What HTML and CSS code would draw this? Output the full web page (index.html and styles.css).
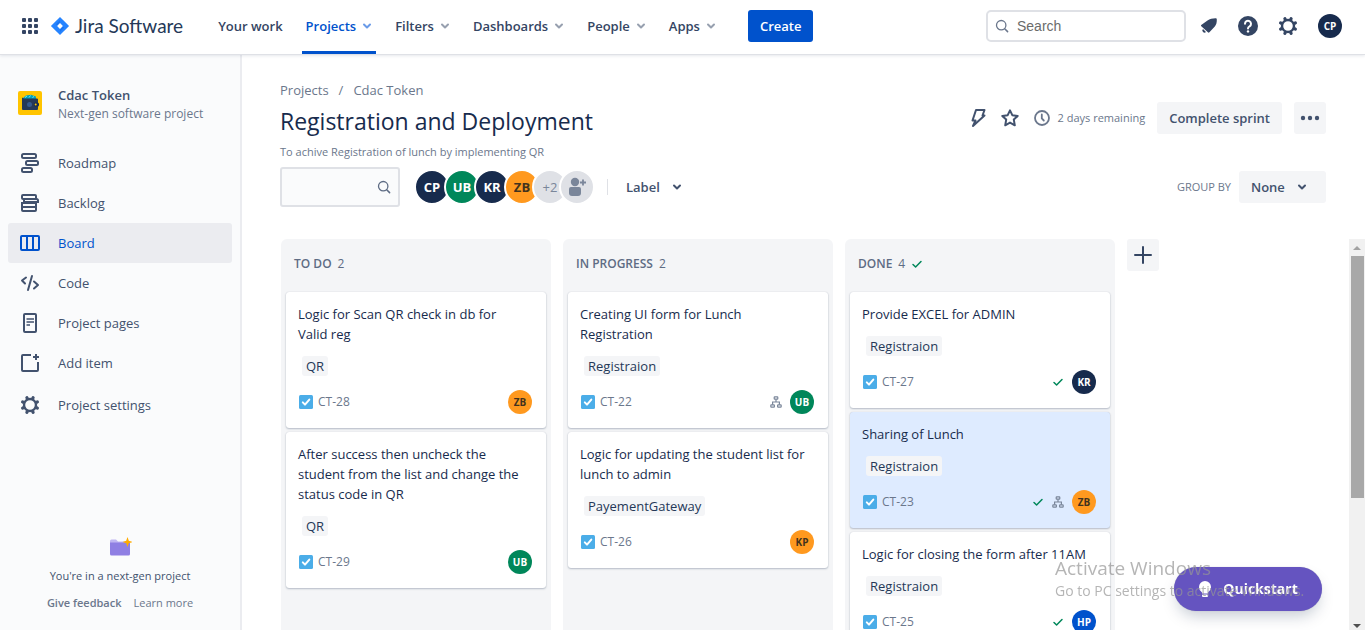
FILE: index.html
```html
<!DOCTYPE html>
<html lang="en">
<head>
<meta charset="utf-8">
<meta name="viewport" content="width=device-width, initial-scale=1">
<title>Registration and Deployment - Jira Software</title>
<link rel="stylesheet" href="styles.css">
</head>
<body>
<svg class="sprite" aria-hidden="true">
  <symbol id="i-chevron" viewBox="0 0 10 10"><path d="M2 3.5 5 6.5 8 3.5" fill="none" stroke="currentColor" stroke-width="2" stroke-linecap="round" stroke-linejoin="round"/></symbol>
  <symbol id="i-search" viewBox="0 0 14 14"><circle cx="6.2" cy="6.2" r="4.700" fill="none" stroke="currentColor" stroke-width="1.3"/><path d="M9.700 9.700 12.600 12.600" stroke="currentColor" stroke-width="1.5" stroke-linecap="round"/></symbol>
  <symbol id="i-gear" viewBox="0 0 20 20"><circle cx="10" cy="10" r="6" fill="none" stroke="currentColor" stroke-width="2.4"/><path d="M7.2 3.2 6.9 2.6M12.8 3.2 13.1 2.6M16.8 7.2 17.4 6.9M16.8 12.8 17.4 13.1M12.8 16.8 13.1 17.4M7.2 16.8 6.9 17.4M3.2 12.8 2.6 13.1M3.2 7.2 2.6 6.9" fill="none" stroke="currentColor" stroke-width="3.2" stroke-linecap="round"/></symbol>
  <symbol id="i-task" viewBox="0 0 14 14"><rect width="14" height="14" rx="1.5" fill="#4bade8"/><path d="M3.8 7.4 6 9.6 10.3 4.6" fill="none" stroke="#fff" stroke-width="2" stroke-linecap="round" stroke-linejoin="round"/></symbol>
  <symbol id="i-check" viewBox="0 0 12 12"><path d="M2 6.5 4.6 9 10 3.5" fill="none" stroke="#00875a" stroke-width="1.5" stroke-linecap="round" stroke-linejoin="round"/></symbol>
  <symbol id="i-tree" viewBox="0 0 12 12"><g fill="none" stroke="#7a869a" stroke-width="1.2"><rect x="4.2" y=".8" width="3.6" height="2.4" rx=".6"/><rect x=".8" y="8.8" width="3.6" height="2.4" rx=".6"/><rect x="7.6" y="8.8" width="3.6" height="2.4" rx=".6"/><path d="M6 3.2V6M2.6 8.8V6H9.4V8.8"/></g></symbol>
</svg>

<header class="topbar">
  <button class="icon-btn switcher" aria-label="Switch to">
    <svg width="16" height="16" viewBox="0 0 16 16" fill="currentColor"><rect width="4" height="4" rx="1"/><rect x="6" width="4" height="4" rx="1"/><rect x="12" width="4" height="4" rx="1"/><rect y="6" width="4" height="4" rx="1"/><rect x="6" y="6" width="4" height="4" rx="1"/><rect x="12" y="6" width="4" height="4" rx="1"/><rect y="12" width="4" height="4" rx="1"/><rect x="6" y="12" width="4" height="4" rx="1"/><rect x="12" y="12" width="4" height="4" rx="1"/></svg>
  </button>
  <a class="logo" href="#">
    <svg width="18" height="18" viewBox="0 0 18 18"><path d="M9 0 17.6 8.4a.9.9 0 0 1 0 1.200L9 18 .4 9.600a.9.9 0 0 1 0-1.200Z" fill="#2684ff"/><path d="M9 3v3L6.200 8.600 4.800 7.200ZM9 15v-3l2.800-2.600 1.400 1.400Z" fill="#0052cc" opacity=".3"/><path d="M9 6.100 11.900 9 9 11.900 6.100 9Z" fill="#fff"/></svg>
    <span>Jira Software</span>
  </a>
  <nav class="mainnav">
    <a href="#">Your work</a>
    <a class="active" href="#">Projects <svg class="chev"><use href="#i-chevron"/></svg></a>
    <a href="#">Filters <svg class="chev"><use href="#i-chevron"/></svg></a>
    <a href="#">Dashboards <svg class="chev"><use href="#i-chevron"/></svg></a>
    <a href="#">People <svg class="chev"><use href="#i-chevron"/></svg></a>
    <a href="#">Apps <svg class="chev"><use href="#i-chevron"/></svg></a>
  </nav>
  <button class="create">Create</button>
  <div class="top-right">
    <label class="search"><svg width="14" height="14"><use href="#i-search"/></svg><input type="text" placeholder="Search" aria-label="Search"></label>
    <button class="icon-btn" aria-label="Notifications"><svg width="18" height="18" viewBox="0 0 18 18" fill="currentColor"><path d="M15.500 1.200c.9 0 1.300.4 1.300 1.200.1 2.800-.5 5.400-2 7L9.400 15.300a1 1 0 0 1-1.500 0L1.300 9.200c-.5-.5-.4-1.200.3-1.500L7.500 3.500c2.200-1.500 5-2.300 8-2.300Z"/><path d="M3 12 6 15a2.100 2.100 0 0 1-3-3Z"/></svg></button>
    <button class="icon-btn" aria-label="Help"><svg width="20" height="20" viewBox="0 0 20 20"><circle cx="10" cy="10" r="10" fill="currentColor"/><path d="M7 7.800a3 3 0 1 1 4.600 2.500c-1 .7-1.600 1-1.600 2.200" fill="none" stroke="#fff" stroke-width="2" stroke-linecap="round"/><circle cx="10" cy="15.400" r="1.200" fill="#fff"/></svg></button>
    <button class="icon-btn" aria-label="Settings"><svg width="20" height="20"><use href="#i-gear"/></svg></button>
    <button class="avatar small navy" aria-label="Your profile">CP</button>
  </div>
</header>

<div class="shell">
  <aside class="sidebar">
    <div class="project">
      <svg width="24" height="24" viewBox="0 0 24 24"><rect width="24" height="24" rx="2" fill="#ffc400"/><path d="M5 7 8 4.500 13 3.800 18 5.500V8H5Z" fill="#00a3bf"/><path d="M7 6.500 9 5M11 6.500l1.500-2M14.500 6.500l1.500-1" stroke="#79e2f2" stroke-width="1"/><path d="M4 6.500 6 7.500H19a1 1 0 0 1 1 1V18a1 1 0 0 1-1 1H5a1 1 0 0 1-1-1Z" fill="#253858"/><circle cx="11.500" cy="13.500" r="2.500" fill="#35598f"/><rect x="16" y="11.500" width="5" height="4" rx="1.500" fill="#172b4d"/><circle cx="17.700" cy="13.500" r="1" fill="#ffc400"/></svg>
      <div><div class="project-name">Cdac Token</div><div class="project-type">Next-gen software project</div></div>
    </div>
    <nav class="sidenav">
      <a href="#"><svg width="20" height="20" viewBox="0 0 20 20" fill="none" stroke="currentColor" stroke-width="2"><rect x="2" y="1" width="14" height="4" rx="1.500"/><rect x="6" y="8" width="12" height="4" rx="1.500"/><rect x="2" y="15" width="10" height="4" rx="1.500"/></svg>Roadmap</a>
      <a href="#"><svg width="20" height="20" viewBox="0 0 20 20" fill="none" stroke="currentColor" stroke-width="2"><rect x="2" y="2" width="14" height="4" rx="1"/><path d="M4 6H16.500a1.500 1.500 0 0 1 1.500 1.500V9H4ZM2 9V17a1 1 0 0 0 1 1H15a1 1 0 0 0 1-1V10M3 14H16M3 10H16"/></svg>Backlog</a>
      <a class="active" href="#"><svg width="20" height="20" viewBox="0 0 20 20" fill="none" stroke="currentColor" stroke-width="2"><rect x="1" y="3" width="18" height="14" rx="1"/><path d="M7 3V17M13 3V17"/></svg>Board</a>
      <a href="#"><svg width="20" height="20" viewBox="0 0 20 20" fill="none" stroke="currentColor" stroke-width="2" stroke-linecap="round" stroke-linejoin="round"><path d="M6 4.500 2 7.500 5 10.500M14 8.500 18 12 14 15.500M12 3 8 17"/></svg>Code</a>
      <a href="#"><svg width="20" height="20" viewBox="0 0 20 20" fill="none" stroke="currentColor" stroke-width="2"><rect x="4" y="1" width="12" height="18" rx="1"/><path d="M6.500 6H14M6.500 9H14M6.500 12H10" stroke-width="1.600"/></svg>Project pages</a>
      <a href="#"><svg width="20" height="20" viewBox="0 0 20 20" fill="none" stroke="currentColor" stroke-width="2"><path d="M11 2H3a1 1 0 0 0-1 1V17a1 1 0 0 0 1 1H17a1 1 0 0 0 1-1V9M16 1V7M13 4H19"/></svg>Add item</a>
      <a class="settings" href="#"><svg width="20" height="20"><use href="#i-gear"/></svg>Project settings</a>
    </nav>
    <div class="side-foot">
      <svg width="24" height="24" viewBox="0 0 24 24"><path d="M2 7a1.500 1.500 0 0 1 1.500-1.500H8L10 7.500H20V12H2Z" fill="#c0b6f2"/><path d="M2 8.500H22V20a1.500 1.500 0 0 1-1.500 1.500H3.500A1.500 1.500 0 0 1 2 20Z" fill="#8f7fe3"/><path d="M19.500 3 20.800 6.700 24.500 8 20.800 9.300 19.500 13 18.200 9.300 14.500 8 18.200 6.700Z" fill="#ffab00"/></svg>
      <p>You're in a next-gen project</p>
      <div class="foot-links"><a class="strong" href="#">Give feedback</a><a href="#">Learn more</a></div>
    </div>
  </aside>

  <main class="main">
    <div class="page-head">
      <nav class="crumbs"><a href="#">Projects</a><span>/</span><a href="#">Cdac Token</a></nav>
      <div class="title-row">
        <h1>Registration and Deployment</h1>
        <div class="actions">
          <button class="icon-btn" aria-label="Automation"><svg width="20" height="20" viewBox="0 0 20 20" fill="none" stroke="currentColor" stroke-width="2" stroke-linejoin="round"><path d="M8 2H16.500L14.500 7.500H16.500L5 18 7.500 12.500H4.500Z"/></svg></button>
          <button class="icon-btn" aria-label="Star"><svg width="20" height="20" viewBox="0 0 20 20" fill="none" stroke="currentColor" stroke-width="2" stroke-linejoin="round"><path d="M10 2.300 12.300 7.200 17.700 7.900 13.800 11.600 14.800 17.300 10 14.600 5.200 17.300 6.200 11.600 2.300 7.900 7.700 7.200Z"/></svg></button>
          <span class="remaining"><svg width="16" height="16" viewBox="0 0 16 16" fill="none" stroke="currentColor" stroke-width="1.800" stroke-linecap="round"><circle cx="8" cy="8" r="7"/><path d="M7.800 4.500V8.500L9.800 10.500"/></svg>2 days remaining</span>
          <button class="btn">Complete sprint</button>
          <button class="btn more" aria-label="More"><svg width="20" height="6" viewBox="0 0 20 6" fill="currentColor"><circle cx="3" cy="3" r="2.200"/><circle cx="10" cy="3" r="2.200"/><circle cx="17" cy="3" r="2.200"/></svg></button>
        </div>
      </div>
      <p class="goal">To achive Registration of lunch by implementing QR</p>
      <div class="tools">
        <label class="filter"><input type="text" aria-label="Search this board"><svg width="14" height="14"><use href="#i-search"/></svg></label>
        <div class="people">
          <button class="avatar navy">CP</button><button class="avatar green">UB</button><button class="avatar navy">KR</button><button class="avatar orange">ZB</button><button class="avatar grey">+2</button><button class="avatar grey add" aria-label="Add people"><svg width="20" height="20" viewBox="0 0 20 20" fill="#7a869a"><circle cx="8" cy="5" r="4.200"/><path d="M2 12a2 2 0 0 1 2-2h8a2 2 0 0 1 2 2v4a3 3 0 0 1-3 3H5a3 3 0 0 1-3-3Z"/><path d="M16 2.500V8.500M13 5.500H19" stroke="#7a869a" stroke-width="1.800"/></svg></button>
        </div>
        <button class="label-btn">Label <svg class="chev"><use href="#i-chevron"/></svg></button>
        <div class="group"><label for="group-by">GROUP BY</label>
          <span class="select"><select id="group-by"><option>None</option><option>Assignee</option></select><svg class="chev"><use href="#i-chevron"/></svg></span></div>
      </div>
    </div>

    <div class="board">
      <div class="columns">
        <section class="column">
          <h2>TO DO <span>2</span></h2>
          <article class="card"><p>Logic for Scan QR check in db for Valid reg</p><span class="tag">QR</span><footer><svg width="14" height="14"><use href="#i-task"/></svg><a href="#">CT-28</a><span class="meta"><span class="avatar small orange">ZB</span></span></footer></article>
          <article class="card"><p>After success then uncheck the student from the list and change the status code in QR</p><span class="tag">QR</span><footer><svg width="14" height="14"><use href="#i-task"/></svg><a href="#">CT-29</a><span class="meta"><span class="avatar small green">UB</span></span></footer></article>
        </section>
        <section class="column">
          <h2>IN PROGRESS <span>2</span></h2>
          <article class="card"><p>Creating UI form for Lunch Registration</p><span class="tag">Registraion</span><footer><svg width="14" height="14"><use href="#i-task"/></svg><a href="#">CT-22</a><span class="meta"><svg width="12" height="12"><use href="#i-tree"/></svg><span class="avatar small green">UB</span></span></footer></article>
          <article class="card"><p>Logic for updating the student list for lunch to admin</p><span class="tag">PayementGateway</span><footer><svg width="14" height="14"><use href="#i-task"/></svg><a href="#">CT-26</a><span class="meta"><span class="avatar small orange">KP</span></span></footer></article>
        </section>
        <section class="column">
          <h2>DONE <span>4</span><svg width="12" height="12"><use href="#i-check"/></svg></h2>
          <article class="card"><p>Provide EXCEL for ADMIN</p><span class="tag">Registraion</span><footer><svg width="14" height="14"><use href="#i-task"/></svg><a href="#">CT-27</a><span class="meta"><svg width="12" height="12"><use href="#i-check"/></svg><span class="avatar small navy">KR</span></span></footer></article>
          <article class="card selected"><p>Sharing of Lunch</p><span class="tag">Registraion</span><footer><svg width="14" height="14"><use href="#i-task"/></svg><a href="#">CT-23</a><span class="meta"><svg width="12" height="12"><use href="#i-check"/></svg><svg width="12" height="12"><use href="#i-tree"/></svg><span class="avatar small orange">ZB</span></span></footer></article>
          <article class="card"><p>Logic for closing the form after 11AM</p><span class="tag">Registraion</span><footer><svg width="14" height="14"><use href="#i-task"/></svg><a href="#">CT-25</a><span class="meta"><svg width="12" height="12"><use href="#i-check"/></svg><span class="avatar small blue">HP</span></span></footer></article>
        </section>
        <button class="btn add-col" aria-label="Create column"><svg width="18" height="18" viewBox="0 0 18 18" stroke="currentColor" stroke-width="2" stroke-linecap="round"><path d="M9 1V17M1 9H17"/></svg></button>
      </div>
      <div class="scrollbar" aria-hidden="true">
        <svg width="16" height="17" viewBox="0 0 16 17"><path d="M4 11 8 7 12 11Z" fill="#a3a3a3"/></svg>
        <div class="thumb"></div>
        <svg class="down" width="16" height="17" viewBox="0 0 16 17"><path d="M4 11 8 15 12 11Z" fill="#505050"/></svg>
      </div>
    </div>
  </main>
</div>

<button class="quickstart"><svg width="14" height="18" viewBox="0 0 14 18" fill="#fff"><path d="M7 1a6 6 0 0 1 6 6c0 2.500-1.500 4-3 5.500V13.500H4V12.500C2.500 11 1 9.500 1 7a6 6 0 0 1 6-6Z"/><rect x="4" y="14.500" width="6" height="2.500" rx="1"/></svg>Quickstart</button>
<div class="watermark"><div class="wm-title">Activate Windows</div><div>Go to PC settings to activate Windows.</div></div>
</body>
</html>
```
FILE: styles.css
```css
* { box-sizing: border-box; }
body {
  margin: 0;
  height: 100vh;
  overflow: hidden;
  display: flex;
  flex-direction: column;
  font: 13px/20px "Open Sans", "Noto Sans", sans-serif;
  color: #172b4d;
  background: #fff;
}
a { color: inherit; text-decoration: none; }
p, h1, h2 { margin: 0; }
svg { flex: none; display: block; }
button, input, select { font: inherit; color: inherit; margin: 0; }
button { border: 0; padding: 0; background: none; cursor: pointer; }
.sprite { position: absolute; width: 0; height: 0; }
.chev { width: 10px; height: 10px; }
.icon-btn { display: flex; color: #344563; }

/* Top navigation */
.topbar {
  position: relative;
  flex: none;
  height: 54px;
  padding: 0 23px 2px 22px;
  display: flex;
  align-items: center;
  background: #fff;
  box-shadow: 0 1px 0 #dfe1e6, 0 2px 3px rgba(9, 30, 66, 0.1);
  color: #344563;
}
.logo { display: flex; align-items: center; gap: 6px; margin-left: 13px; font: 19px/24px Lato, sans-serif; color: #253858; }
.mainnav { display: flex; align-self: flex-start; height: 54px; margin-left: 31px; gap: 15px; font-weight: 600; }
.mainnav a { display: flex; align-items: center; gap: 6px; padding: 0 4px; border: solid transparent; border-width: 1px 0 3px; }
.mainnav .chev { color: #97a0af; }
.mainnav .active { color: #0052cc; border-bottom-color: #0052cc; }
.mainnav .active .chev { color: #6a9be8; }
.create { height: 32px; padding: 0 12px; margin-left: 28px; border-radius: 3px; background: #0052cc; color: #fff; font-weight: 600; }
.top-right { display: flex; align-items: center; gap: 20px; margin-left: auto; }
.search { display: flex; align-items: center; gap: 8px; width: 200px; height: 32px; padding: 0 7px; border: 2px solid #dfe1e6; border-radius: 5px; margin-right: -6px; color: #6b778c; }
.search input { min-width: 0; width: 100%; border: 0; outline: 0; padding: 0; background: none; font: 14px/20px "Liberation Sans", sans-serif; }
.search input::placeholder { color: #6b6b6b; opacity: 1; }

/* Avatars */
.avatar { display: flex; align-items: center; justify-content: center; width: 32px; height: 32px; border-radius: 50%; font-size: 13px; font-weight: 700; color: #fff; }
.small { width: 24px; height: 24px; font-size: 10px; }
.navy { background: #172b4d; }
.green { background: #00875a; }
.orange { background: #ff991f; color: #42321e; }
.blue { background: #0052cc; }
.grey { background: #dfe1e6; color: #7a869a; font-weight: 400; }

/* Sidebar */
.shell { flex: 1; min-height: 0; display: flex; }
.sidebar { flex: none; width: 242px; padding: 28px 8px 18px; display: flex; flex-direction: column; background: #fafbfc; border-right: 2px solid #ebecf0; color: #42526e; }
.project { display: flex; align-items: flex-start; gap: 16px; padding: 4px 10px; margin-bottom: 15px; }
.project svg { margin-top: 5px; }
.project-name { font-weight: 600; line-height: 18px; }
.project-type { font-size: 12px; line-height: 20px; color: #6b778c; }
.sidenav a { display: flex; align-items: center; gap: 18px; height: 40px; padding-left: 12px; border-radius: 3px; }
.sidenav .active { background: #ebecf0; color: #0052cc; }
.sidenav .settings { margin-top: 2px; }
.side-foot { margin-top: auto; display: flex; flex-direction: column; align-items: center; font-size: 11px; line-height: 18px; }
.side-foot p { margin: 9px 0; }
.foot-links { display: flex; gap: 12px; color: #6b778c; }
.strong { font-weight: 600; }

/* Page heading */
.main { flex: 1; min-width: 0; display: flex; flex-direction: column; }
.page-head { padding: 26px 39px 0 38px; }
.crumbs { display: flex; gap: 10px; color: #6b778c; }
.title-row { display: flex; align-items: center; justify-content: space-between; height: 38px; }
h1 { font-size: 23px; line-height: 28px; font-weight: 500; padding-top: 4px; }
.actions { display: flex; align-items: center; gap: 12px; padding-bottom: 2px; }
.actions .icon-btn { color: #42526e; }
.remaining { display: flex; align-items: center; gap: 8px; color: #6b778c; font-size: 11px; margin-left: 2px; }
.btn { height: 32px; padding: 0 12px; border-radius: 3px; background: #f4f5f7; color: #42526e; font-weight: 600; }
.more { padding: 0 6px; }
.goal { font-size: 11px; color: #6b778c; padding-top: 4px; }
.tools { display: flex; align-items: center; margin-top: 5px; color: #42526e; }
.filter { display: flex; align-items: center; width: 120px; height: 40px; padding: 0 7px; border: 2px solid #dfe1e6; border-radius: 3px; background: #fafbfc; color: #5e6c84; }
.filter input { min-width: 0; flex: 1; border: 0; outline: 0; background: none; }
.people { display: flex; margin-left: 14px; }
.people .avatar { width: 36px; height: 36px; border: 2px solid #fff; margin-right: -6px; }
.people .grey { margin-left: -2px; }
.people .add { margin-left: -3px; }
.label-btn { display: flex; align-items: center; gap: 12px; margin-left: 18px; padding-left: 18px; font-weight: 600; height: 16px; border-left: 1px solid #dfe1e6; }
.group { display: flex; align-items: center; gap: 8px; margin-left: auto; }
.group label { font-size: 11px; color: #6b778c; }
.select { display: flex; align-items: center; height: 32px; width: 87px; background: #f4f5f7; border-radius: 3px; font-weight: 600; }
.select select { appearance: none; border: 0; outline: 0; width: 100%; height: 32px; padding: 0 12px; background: none; }
.select .chev { margin: 0 19px 0 -29px; pointer-events: none; }

/* Board */
.board { flex: 1; min-height: 0; margin-top: 32px; display: flex; }
.columns { flex: 1; min-width: 0; display: flex; gap: 12px; padding-left: 39px; overflow: hidden; }
.column { flex: none; width: 270px; padding: 0 5px; background: #f4f5f7; border-radius: 6px 6px 0 0; }
h2 { display: flex; align-items: center; gap: 6px; height: 49px; margin-bottom: 4px; padding-left: 8px; font-size: 12px; font-weight: 600; color: #5e6c84; }
h2 span { font-weight: 400; }
.card { margin-bottom: 4px; padding: 12px 14px 14px 12px; background: #fff; border-radius: 3px; box-shadow: 0 1px 2px rgba(9, 30, 66, 0.25), 0 0 1px rgba(9, 30, 66, 0.2); }
.card p { padding-right: 6px; }
.selected { background: #deebff; }
.tag { display: block; width: fit-content; margin: 12px 0 14px 4px; padding: 0 4px; border-radius: 3px; background: #f4f5f7; color: #253858; line-height: 20px; }
.card footer { display: flex; align-items: center; gap: 5px; padding-left: 1px; font-size: 12px; color: #6b778c; }
.meta { display: flex; align-items: center; gap: 8px; margin-left: auto; }
.add-col { flex: none; padding: 0 7px; color: #344563; }
.scrollbar { flex: none; width: 16px; display: flex; flex-direction: column; background: #f1f1f1; }
.thumb { flex: none; height: 62%; margin: 0 1px 0 2px; background: #a8a8a8; }
.down { margin-top: auto; }

/* Overlays */
.quickstart { position: fixed; right: 43px; bottom: 19px; display: flex; align-items: center; justify-content: center; gap: 11px; width: 148px; height: 44px; border-radius: 22px; background: #6554c0; color: #fff; font-size: 14px; font-weight: 700; box-shadow: 0 8px 16px -4px rgba(9, 30, 66, 0.25), 0 0 1px rgba(9, 30, 66, 0.3); }
.watermark { position: fixed; right: 55px; bottom: 28px; width: 255px; font-size: 14px; line-height: 22px; color: rgba(150, 150, 150, 0.7); white-space: nowrap; pointer-events: none; }
.wm-title { font-size: 19px; line-height: 24px; }
```
